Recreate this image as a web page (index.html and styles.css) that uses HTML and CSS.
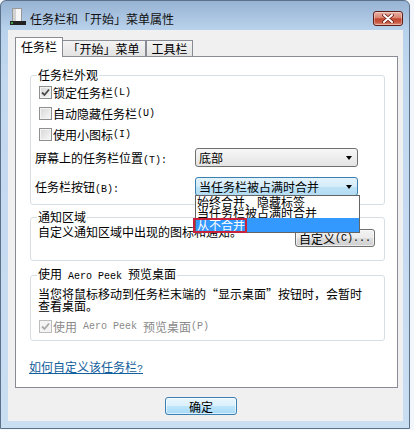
FILE: index.html
```html
<!DOCTYPE html>
<html lang="zh-CN">
<head>
<meta charset="utf-8">
<title>任务栏和「开始」菜单属性</title>
<link rel="stylesheet" href="styles.css">
</head>
<body>
<div class="window">
  <div class="titlebar">
    <svg class="app-icon" width="16" height="17" viewBox="0 0 16 17">
      <rect x="2.5" y="0.5" width="9" height="13" fill="#f6f6f6" stroke="#9a9a9a"/>
      <rect x="3" y="1" width="3" height="12" fill="#d2d2d2"/>
      <rect x="0" y="13" width="16" height="4" fill="#222"/>
      <rect x="1" y="14" width="2" height="2" fill="#46a046"/>
    </svg>
    <span class="title">任务栏和「开始」菜单属性</span>
    <div class="close">
      <svg width="12" height="9" viewBox="0 0 12 9">
        <path d="M2 1 L10 8 M10 1 L2 8" stroke="#6b1a12" stroke-width="3.6" stroke-linecap="round"/>
        <path d="M2 1 L10 8 M10 1 L2 8" stroke="#fff" stroke-width="2" stroke-linecap="round"/>
      </svg>
    </div>
  </div>
  <div class="client">
    <div class="tabs">
      <div class="tab active">任务栏</div>
      <div class="tab t2">「开始」菜单</div>
      <div class="tab t3">工具栏</div>
    </div>
    <div class="panel">
      <fieldset class="group g1">
        <legend>任务栏外观</legend>
        <div class="check">
          <span class="box">
            <svg width="11" height="11" viewBox="0 0 11 11"><path d="M2 5.5 L4.5 8 L9 2.5" fill="none" stroke="#4a4a4a" stroke-width="1.8"/></svg>
          </span>锁定任务栏<span class="m">(L)</span>
        </div>
        <div class="check"><span class="box"></span>自动隐藏任务栏<span class="m">(U)</span></div>
        <div class="check"><span class="box"></span>使用小图标<span class="m">(I)</span></div>
        <div class="field f1">
          <span class="flabel">屏幕上的任务栏位置<span class="m">(T):</span></span>
          <div class="select"><span>底部</span><span class="arrow"></span></div>
        </div>
        <div class="field f2">
          <span class="flabel">任务栏按钮<span class="m">(B):</span></span>
          <div class="select open"><span>当任务栏被占满时合并</span><span class="arrow"></span>
            <div class="droplist">
              <div class="item">始终合并、隐藏标签</div>
              <div class="item">当任务栏被占满时合并</div>
              <div class="item sel"><span class="redbox"></span>从不合并</div>
            </div>
          </div>
        </div>
      </fieldset>
      <fieldset class="group g2">
        <legend>通知区域</legend>
        <div class="notify">
          <span class="ntext">自定义通知区域中出现的图标和通知。</span>
          <div class="btn custom">自定义<span class="m">(C)...</span></div>
        </div>
      </fieldset>
      <fieldset class="group g3">
        <legend>使用<span class="m"> Aero Peek </span>预览桌面</legend>
        <p class="desc">当您将鼠标移动到任务栏末端的“显示桌面”按钮时，会暂时<br>查看桌面。</p>
        <div class="check disabled">
          <span class="box">
            <svg width="11" height="11" viewBox="0 0 11 11"><path d="M2 5.5 L4.5 8 L9 2.5" fill="none" stroke="#a8a8a8" stroke-width="1.8"/></svg>
          </span>使用<span class="m"> Aero Peek </span>预览桌面<span class="m">(P)</span>
        </div>
      </fieldset>
      <a class="help" href="#">如何自定义该任务栏<span class="m">?</span></a>
    </div>
    <div class="footer">
      <div class="btn ok">确定</div>
    </div>
  </div>
</div>
</body>
</html>
```
FILE: styles.css
```css
body {
  margin: 0;
  background: #f3f6fa;
  font-family: "Noto Sans CJK SC", sans-serif;
  font-size: 12px;
  color: #000;
}

.m {
  font-family: "Liberation Mono", monospace;
  font-size: 10px;
  white-space: pre;
}

.window {
  box-sizing: border-box;
  width: 410px;
  height: 429px;
  border: 1px solid #5b7189;
  border-radius: 6px 6px 0 0;
  background: linear-gradient(#97b3d3 0, #b9d2ec 29px, #c2d8ef 80px, #cadef2 100%);
  display: flex;
  flex-direction: column;
}

.titlebar {
  height: 29px;
  flex: none;
  display: flex;
  align-items: flex-start;
  padding-left: 9px;
}

.app-icon {
  margin-top: 7px;
  flex: none;
}

.title {
  margin-left: 4px;
  margin-top: 10px;
  line-height: 16px;
  white-space: nowrap;
  color: #111;
}

.close {
  margin-left: auto;
  margin-right: 6px;
  margin-top: 10px;
  width: 30px;
  height: 15px;
  box-sizing: border-box;
  border: 1px solid #5d1f17;
  border-radius: 3px;
  background: linear-gradient(#eab0a2 0%, #d98472 45%, #c2462f 52%, #c65540 78%, #e29782 100%);
  box-shadow: inset 0 0 0 1px rgba(255, 255, 255, 0.35);
  display: flex;
  align-items: center;
  justify-content: center;
}

.client {
  flex: 1;
  margin: 0 6px 7px 7px;
  background: #f0f0f0;
  display: flex;
  flex-direction: column;
  padding: 7px 5px 0 7px;
}

.tabs {
  height: 19px;
  flex: none;
  display: flex;
  align-items: flex-end;
}

.tab {
  box-sizing: border-box;
  height: 16px;
  border: 1px solid #898c95;
  border-bottom: none;
  background: linear-gradient(#f3f3f3, #e3e3e3);
  line-height: 15px;
  text-align: center;
  white-space: nowrap;
}

.tab.active {
  width: 48px;
  height: 20px;
  margin-bottom: -1px;
  background: #fff;
  position: relative;
  z-index: 1;
  line-height: 18px;
}

.tab.t2 {
  width: 84px;
  margin-left: -1px;
  border-left: none;
}

.tab.t3 {
  width: 47px;
}

.panel {
  flex: 1;
  box-sizing: border-box;
  border: 1px solid #898c95;
  background: #fff;
  padding: 11px 12px 0 14px;
  display: flex;
  flex-direction: column;
}

.group {
  margin: 0;
  border: 1px solid #d5dfe5;
  border-radius: 3px;
  padding: 0 8px 8px 7px;
  min-inline-size: 0;
}

.group legend {
  padding: 0 1px;
  margin-left: -1px;
  line-height: 14px;
  white-space: nowrap;
}

.check {
  display: flex;
  align-items: center;
  height: 21px;
  margin-left: 1px;
  white-space: nowrap;
}

.box {
  box-sizing: border-box;
  width: 13px;
  height: 13px;
  margin-right: 1px;
  border: 1px solid #8e8f8f;
  background: linear-gradient(135deg, #d6d6d6, #f8f8f8);
  box-shadow: inset 0 0 0 1px #f4f4f4;
  display: flex;
  align-items: center;
  justify-content: center;
}

.check.disabled {
  color: #8a8a8a;
  height: 20px;
  margin-top: 4px;
}

.check.disabled .box {
  border-color: #bcbcbc;
  background: #f4f4f4;
}

.field {
  display: grid;
  grid-template-columns: 160px 163px;
  align-items: center;
  margin-left: -3px;
  height: 19px;
  white-space: nowrap;
}

.field.f1 {
  margin-top: 3px;
}

.field.f2 {
  margin-top: 10px;
}

.select {
  position: relative;
  box-sizing: border-box;
  height: 19px;
  border: 1px solid #707070;
  border-radius: 3px;
  background: linear-gradient(#f7f7f7, #e4e4e4);
  display: flex;
  align-items: center;
  justify-content: space-between;
  padding: 0 5px 0 3px;
  line-height: 17px;
}

.select.open {
  border-color: #3c7fb1;
  background: linear-gradient(#e3f3fc 0%, #d4ecf9 50%, #bde2f6 51%, #b3dcf3 100%);
}

.arrow {
  width: 0;
  height: 0;
  border-left: 3px solid transparent;
  border-right: 3px solid transparent;
  border-top: 4px solid #000;
}

.droplist {
  position: absolute;
  left: -1px;
  top: 17px;
  z-index: 2;
  box-sizing: border-box;
  width: 165px;
  border: 1px solid #646464;
  background: #fff;
}

.item {
  line-height: 11px;
  height: 11px;
  padding-left: 1px;
  white-space: nowrap;
}

.item.sel {
  position: relative;
  height: 14px;
  line-height: 14px;
  background: #3399ff;
  color: #fff;
}

.redbox {
  position: absolute;
  left: -3px;
  top: 0;
  width: 54px;
  height: 15px;
  box-sizing: border-box;
  border: 2px solid #c8213c;
}

.g2 {
  margin-top: 5px;
  padding-right: 9px;
  padding-bottom: 13px;
}

.notify {
  display: flex;
  align-items: flex-start;
  justify-content: space-between;
}

.ntext {
  line-height: 16px;
  white-space: nowrap;
}

.btn {
  box-sizing: border-box;
  border: 1px solid #707070;
  border-radius: 3px;
  background: linear-gradient(#f2f2f2 0%, #ebebeb 50%, #dddddd 51%, #cfcfcf 100%);
  box-shadow: inset 0 0 0 1px rgba(255, 255, 255, 0.6);
  display: flex;
  align-items: center;
  justify-content: center;
  white-space: nowrap;
}

.btn.custom {
  width: 80px;
  height: 18px;
  margin-top: 5px;
}

.g3 {
  margin-top: 6px;
  padding-bottom: 4px;
}

.desc {
  margin: 4px 0 0;
  line-height: 12px;
  white-space: nowrap;
}

.help {
  margin-top: 18px;
  margin-left: -1px;
  align-self: flex-start;
  line-height: 16px;
  color: #14609c;
  text-decoration: underline;
  white-space: nowrap;
}

.footer {
  height: 33px;
  flex: none;
  box-sizing: border-box;
  padding: 9px 0 0 150px;
  display: flex;
  align-items: flex-start;
}

.btn.ok {
  width: 72px;
  height: 18px;
  border-color: #3c7fb1;
  background: linear-gradient(#eaf6fd 0%, #d9f0fc 50%, #bee6fd 51%, #a7d9f5 100%);
}
```
